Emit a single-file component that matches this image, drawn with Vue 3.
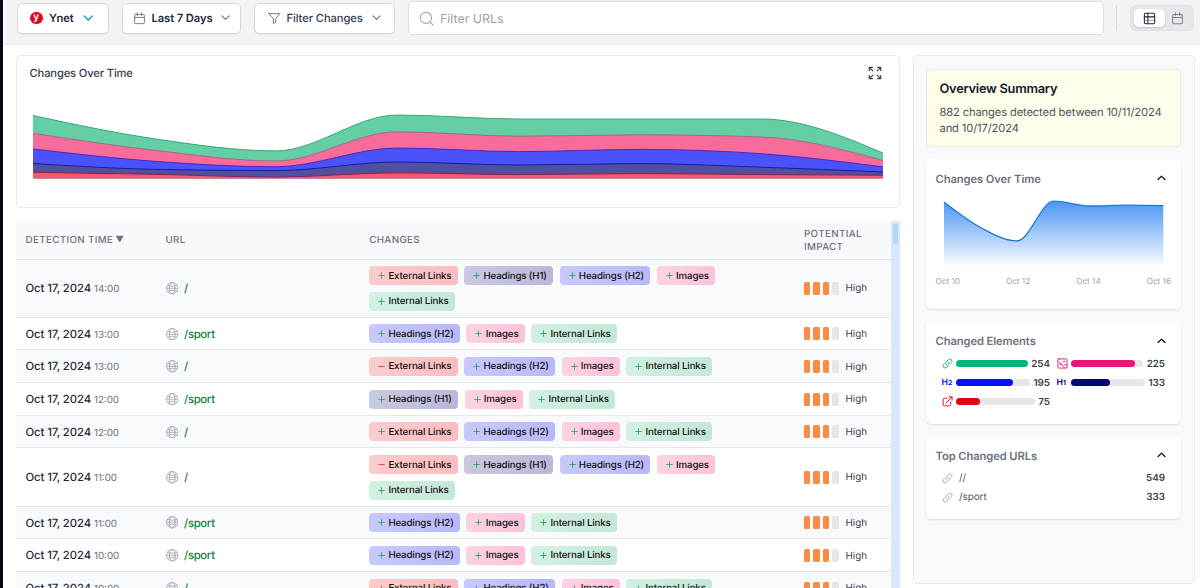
<template>
  <div class="app">
    <div class="rail"></div>
    <div class="main">
      <header class="toolbar">
        <button class="btn site">
          <span class="logo">y</span>
          <span class="label">Ynet</span>
          <svg class="chevron blue" viewBox="0 0 10 6"><path d="M1 .8 5 4.8 9 .8" /></svg>
        </button>
        <button class="btn range">
          <svg class="icon" viewBox="0 0 24 24"><rect x="3" y="4.500" width="18" height="17" rx="2" /><path d="M8 1.500v5M16 1.500v5M3 10h18" /></svg>
          <span class="label">Last 7 Days</span>
          <svg class="chevron" viewBox="0 0 10 6"><path d="M1 .8 5 4.800 9 .8" /></svg>
        </button>
        <button class="btn filter">
          <svg class="icon" viewBox="0 0 24 24"><path d="M2 3h20l-8 9.500V19l-4 2.500v-9z" /></svg>
          <span class="label">Filter Changes</span>
          <svg class="chevron" viewBox="0 0 10 6"><path d="M1 .8 5 4.800 9 .8" /></svg>
        </button>
        <label class="search">
          <svg viewBox="0 0 24 24"><circle cx="11" cy="11" r="9" /><path d="m17.600 17.600 4.900 4.900" /></svg>
          <input type="text" placeholder="Filter URLs" />
        </label>
        <div class="separator"></div>
        <div class="toggle">
          <button class="toggle-btn active">
            <svg viewBox="0 0 24 24"><rect x="2.500" y="2.500" width="19" height="19" rx="2" /><path d="M9 2.500v19M2.500 9h19" /><path d="M2.500 15.200h19" stroke-opacity=".45" /></svg>
          </button>
          <button class="toggle-btn">
            <svg viewBox="0 0 24 24"><rect x="3" y="4.500" width="18" height="17" rx="2" /><path d="M8 1.500v5M16 1.500v5M3 10h18" /></svg>
          </button>
        </div>
      </header>

      <div class="content">
        <div class="left">
          <section class="chart-card">
            <div class="chart-head">
              <h2>Changes Over Time</h2>
              <svg class="expand" viewBox="0 0 16 16">
                <path d="M1.500 5v-3.500h3.500M1.500 1.500l4 4M11 1.500h3.500v3.500M14.500 1.500l-4 4M1.500 11v3.500h3.500M1.500 14.500l4-4M11 14.500h3.500v-3.500M14.500 14.500l-4-4" />
              </svg>
            </div>
            <svg class="stack" viewBox="33 110 850 70">
              <template v-for="layer in layers" :key="layer.name">
                <path :d="layer.area" :fill="layer.fill" />
                <path :d="layer.line" :stroke="layer.stroke" fill="none" />
              </template>
            </svg>
          </section>

          <div class="table-wrap">
            <div class="table">
              <div class="tr th">
                <div class="td">Detection Time <span class="sort">▼</span></div>
                <div class="td">URL</div>
                <div class="td">Changes</div>
                <div class="td">Potential Impact</div>
              </div>
              <div v-for="(row, i) in rows" :key="i" class="tr">
                <div class="td date">
                  <div>Oct 17, 2024 <small>{{ row.time }}</small></div>
                </div>
                <div class="td url">
                  <svg viewBox="0 0 24 24"><circle cx="12" cy="12" r="11" /><ellipse cx="12" cy="12" rx="5.500" ry="11" /><path d="M1 12h22M3 6.500q9 4 18 0M3 17.500q9-4 18 0" /></svg>
                  <a>{{ row.url }}</a>
                </div>
                <div class="td tags">
                  <span v-for="tag in row.tags" :key="tag" class="tag" :class="tagTypes[tag].cls">
                    <svg viewBox="0 0 8 8" :class="{ minus: row.removed && tag === 'ext' }">
                      <path :d="row.removed && tag === 'ext' ? 'M.8 4h6.400' : 'M.8 4h6.400M4 .8v6.400'" />
                    </svg>
                    <b>{{ tagTypes[tag].label }}</b>
                  </span>
                </div>
                <div class="td impact">
                  <i v-for="n in 4" :key="n" :class="{ on: n < 4 }"></i>
                  <span>High</span>
                </div>
              </div>
            </div>
            <div class="scrollbar"><div class="thumb"></div></div>
          </div>
        </div>

        <aside class="sidebar">
          <section class="summary">
            <h3>Overview Summary</h3>
            <p>882 changes detected between 10/11/2024<br />and 10/17/2024</p>
          </section>

          <section class="panel trend">
            <div class="panel-head">
              <h4>Changes Over Time</h4>
              <svg class="caret" viewBox="0 0 10 6"><path d="M1.200 5 5 1.200 8.800 5" /></svg>
            </div>
            <svg class="mini" viewBox="943 198 221 70">
              <defs>
                <linearGradient id="miniFill" x1="0" y1="0" x2="0" y2="1">
                  <stop offset="0" stop-color="#4b97f3" />
                  <stop offset="1" stop-color="#4b8ff3" stop-opacity="0" />
                </linearGradient>
              </defs>
              <path :d="mini.area" fill="url(#miniFill)" />
              <path :d="mini.line" fill="none" stroke="#1c7cd6" stroke-width="1.300" />
            </svg>
            <div class="axis">
              <span>Oct 10</span><span>Oct 12</span><span>Oct 14</span><span>Oct 16</span>
            </div>
          </section>

          <section class="panel elements">
            <div class="panel-head">
              <h4>Changed Elements</h4>
              <svg class="caret" viewBox="0 0 10 6"><path d="M1.200 5 5 1.200 8.800 5" /></svg>
            </div>
            <div class="bars">
              <div v-for="el in elements" :key="el.icon" class="bar-row" :style="{ color: el.color }">
                <span v-if="el.sub" class="h-icon">H<em>{{ el.sub }}</em></span>
                <svg v-else class="el-icon" viewBox="0 0 24 24"><path :d="icons[el.icon]" /></svg>
                <div class="track"><div class="fill" :style="{ width: el.pct + '%' }"></div></div>
                <strong>{{ el.count }}</strong>
              </div>
            </div>
          </section>

          <section class="panel urls">
            <div class="panel-head">
              <h4>Top Changed URLs</h4>
              <svg class="caret" viewBox="0 0 10 6"><path d="M1.200 5 5 1.200 8.800 5" /></svg>
            </div>
            <div v-for="u in topUrls" :key="u.path" class="url-row">
              <svg class="el-icon" viewBox="0 0 24 24"><path :d="icons.link" /></svg>
              <span>{{ u.path }}</span>
              <strong>{{ u.count }}</strong>
            </div>
          </section>
        </aside>
      </div>
    </div>
  </div>
</template>

<script setup>
import { ref, computed } from 'vue';

// Monotone cubic interpolation through the given points
const monotone = (xs, ys) => {
  const n = xs.length;
  const slopes = [];
  for (let i = 0; i < n - 1; i++) slopes.push((ys[i + 1] - ys[i]) / (xs[i + 1] - xs[i]));
  const t = [];
  for (let i = 1; i < n - 1; i++) {
    const a = slopes[i - 1];
    const b = slopes[i];
    t[i] = a * b <= 0 ? 0 : Math.sign(a) * Math.min(Math.abs(a), Math.abs(b), Math.abs(a + b) / 4) * 2;
  }
  t[0] = (3 * slopes[0] - t[1]) / 2;
  t[n - 1] = (3 * slopes[n - 2] - t[n - 2]) / 2;
  let d = `M${xs[0]} ${ys[0]}`;
  for (let i = 0; i < n - 1; i++) {
    const dx = (xs[i + 1] - xs[i]) / 3;
    d += `C${xs[i] + dx} ${ys[i] + dx * t[i]} ${xs[i + 1] - dx} ${ys[i + 1] - dx * t[i + 1]} ${xs[i + 1]} ${ys[i + 1]}`;
  }
  return d;
};

const spread = (from, to, n) => Array.from({ length: n }, (_, i) => from + ((to - from) * i) / (n - 1));

const series = ref([
  { name: 'internal', fill: '#64cfa4', stroke: '#36a97c', ys: [115.5, 138.8, 150.9, 115, 119, 119, 119, 153] },
  { name: 'images', fill: '#f86c9c', stroke: '#a2698d', ys: [133.3, 150.3, 161, 131.8, 136.2, 134.8, 137, 160.5] },
  { name: 'h2', fill: '#4a52fb', stroke: '#4a26c4', ys: [149, 161.3, 166.8, 148, 151.6, 149.4, 153.7, 166.9] },
  { name: 'h1', fill: '#4f50a0', stroke: '#1a1c9c', ys: [163.5, 169.4, 170.6, 162, 165, 163.6, 167.2, 172] },
  { name: 'external', fill: '#ff5860', stroke: '#8c1c50', ys: [172.3, 174.3, 177, 172.8, 174.6, 173.6, 174.6, 175.2] }
]);

const layers = computed(() => {
  const xs = spread(33, 883, 8);
  return series.value.map(s => {
    const line = monotone(xs, s.ys);
    return { ...s, line, area: `${line}V178.300H33Z` };
  });
});

const mini = computed(() => {
  const line = monotone(spread(944, 1163.3, 7), [202, 227.5, 241, 201.2, 206, 205.2, 205.7]);
  return { line, area: `${line}V267H944Z` };
});

const tagTypes = {
  ext: { label: 'External Links', cls: 'red' },
  h1: { label: 'Headings (H1)', cls: 'navy' },
  h2: { label: 'Headings (H2)', cls: 'indigo' },
  img: { label: 'Images', cls: 'pink' },
  int: { label: 'Internal Links', cls: 'green' }
};

const rows = ref([
  { time: '14:00', url: '/', tags: ['ext', 'h1', 'h2', 'img', 'int'] },
  { time: '13:00', url: '/sport', tags: ['h2', 'img', 'int'] },
  { time: '13:00', url: '/', tags: ['ext', 'h2', 'img', 'int'], removed: true },
  { time: '12:00', url: '/sport', tags: ['h1', 'img', 'int'] },
  { time: '12:00', url: '/', tags: ['ext', 'h2', 'img', 'int'] },
  { time: '11:00', url: '/', tags: ['ext', 'h1', 'h2', 'img', 'int'], removed: true },
  { time: '11:00', url: '/sport', tags: ['h2', 'img', 'int'] },
  { time: '10:00', url: '/sport', tags: ['h2', 'img', 'int'] },
  { time: '10:00', url: '/', tags: ['ext', 'h2', 'img', 'int'] }
]);

const icons = {
  link: 'M13.200 8.700a4.500 4.500 0 0 1 1.200 7.200l-4.500 4.500a4.500 4.500 0 0 1-6.400-6.400l1.800-1.700M18.800 11.700l1.700-1.700a4.500 4.500 0 0 0-6.400-6.400l-4.500 4.500a4.500 4.500 0 0 0 1.200 7.200',
  image: 'M4 2h16a2 2 0 0 1 2 2v16a2 2 0 0 1-2 2H4a2 2 0 0 1-2-2V4a2 2 0 0 1 2-2ZM5 9l11 12M6 14l4-1M15 7h2v1h-2zM16 15l3-1 3 2',
  external: 'M11 5H5a2.500 2.500 0 0 0-2.500 2.500V19A2.500 2.500 0 0 0 5 21.500h11.500A2.500 2.500 0 0 0 19 19v-6M8.500 15.500 22 2M15 2h7v7'
};

const elements = ref([
  { icon: 'link', color: '#06b67f', pct: 100, count: 254 },
  { icon: 'image', color: '#ec1379', pct: 89, count: 225 },
  { icon: 'h2', sub: '2', color: '#0a12f5', pct: 77, count: 195 },
  { icon: 'h1', sub: '1', color: '#05057e', pct: 52.3, count: 133 },
  { icon: 'external', color: '#e30613', pct: 30, count: 75 }
]);

const topUrls = ref([
  { path: '//', count: 549 },
  { path: '/sport', count: 333 }
]);
</script>

<style>
body {
  background: #fff;
}
</style>

<style scoped>
* {
  box-sizing: border-box;
}

.app {
  display: flex;
  width: 1200px;
  height: 588px;
  overflow: hidden;
  font-family: Inter, "Liberation Sans", sans-serif;
  text-rendering: geometricPrecision;
  color: #1f2937;
}

h2, h3, h4, p {
  margin: 0;
}

svg {
  display: block;
  flex: none;
  fill: none;
  stroke: currentColor;
  stroke-linecap: round;
  stroke-linejoin: round;
}

button {
  font: inherit;
  color: inherit;
  text-rendering: inherit;
}

.rail {
  width: 3px;
  background: #0a0614;
}

.main {
  flex: 1;
  min-width: 0;
}

/* 顶部工具栏 */
.toolbar {
  display: flex;
  align-items: flex-start;
  height: 45px;
  margin-left: 1px;
  padding-left: 12.5px;
  background: #f2f3f5;
  border-bottom: 1px solid #e7e9ec;
}

.btn {
  display: flex;
  align-items: center;
  height: 31px;
  margin: 3px 13px 0 0;
  padding: 0 0 1px 12.5px;
  background: #fff;
  border: 1px solid #d5d8dd;
  border-radius: 5px;
  box-shadow: 0 1px 1px rgba(0, 0, 0, 0.04);
  font-size: 11.2px;
  font-weight: 600;
  letter-spacing: -0.09px;
  white-space: nowrap;
}

.site { width: 92.5px; }
.range { width: 119px; padding-left: 9.5px; }
.filter { width: 141px; font-weight: 500; color: #374151; }

.btn .icon {
  width: 13px;
  height: 13px;
  margin-right: 6px;
  stroke-width: 1.7;
  color: #6b7280;
}

.logo {
  width: 12.5px;
  height: 12.5px;
  margin-right: 6.5px;
  border-radius: 50%;
  background: #dd0a20;
  color: #fff;
  font-size: 10px;
  line-height: 11px;
  text-align: center;
}

.chevron {
  width: 9px;
  height: 5.5px;
  margin-left: 9px;
  stroke-width: 1.2;
  color: #6b7280;
}

.chevron.blue {
  width: 10.5px;
  height: 6.3px;
  color: #0c8bc4;
}

.search {
  display: flex;
  align-items: center;
  width: 696px;
  height: 34px;
  margin-top: 1px;
  padding-left: 9.5px;
  background: #fff;
  border: 1px solid #d9dce1;
  border-radius: 5px;
  color: #9ca3af;
}

.search svg {
  width: 15px;
  height: 15px;
  margin-right: 6.5px;
  stroke-width: 1.7;
}

.search input {
  flex: 1;
  border: 0;
  padding: 0;
  outline: 0;
  font: 12.4px Inter, sans-serif;
  text-rendering: inherit;
}

.search input::placeholder {
  color: #9ca3af;
}

.separator {
  width: 1px;
  height: 26px;
  margin: 5px 13px 0 12px;
  background: #d6d9de;
}

.toggle {
  display: flex;
  width: 64px;
  height: 26px;
  margin-top: 5px;
  padding: 3px;
  background: #e5e7eb;
  border: 1px solid #dfe1e5;
  border-radius: 6px;
}

.toggle-btn {
  display: flex;
  align-items: center;
  justify-content: center;
  width: 32px;
  padding: 0;
  border: 0;
  border-radius: 5px;
  background: none;
  color: #7b828e;
}

.toggle-btn + .toggle-btn {
  width: 26px;
}

.toggle-btn.active {
  background: #fff;
  color: #1f2937;
  box-shadow: 0 1px 2px rgba(0, 0, 0, 0.15);
}

.toggle svg {
  width: 13px;
  height: 13px;
  stroke-width: 1.9;
}

.content {
  display: flex;
  gap: 12.5px;
  padding: 10px 0 0 13px;
}

.left {
  width: 884px;
}

.chart-card {
  height: 153px;
  border: 1px solid #e8eaed;
  border-radius: 5px;
}

.chart-head {
  display: flex;
  justify-content: space-between;
  align-items: center;
  height: 34px;
  padding: 0 17px 0 12.5px;
}

.chart-head h2 {
  font-size: 11.2px;
  font-weight: 500;
  letter-spacing: -0.15px;
  color: #374151;
}

.expand {
  width: 14px;
  height: 14px;
  stroke-width: 1.4;
  color: #374151;
}

.stack {
  width: 850px;
  height: 70px;
  margin: 20px 0 0 15.5px;
}

.stack path,
.mini path {
  stroke-linecap: butt;
}

.stack path:nth-child(odd),
.mini path:first-of-type {
  stroke: none;
}

/* 变更表格 */
.table-wrap {
  display: flex;
  margin-top: 12.5px;
}

.table {
  width: 875px;
}

.tr {
  display: grid;
  grid-template-columns: 140px 203.7px 434.8px 1fr;
  border-bottom: 1px solid #e5e7eb;
}

.tr:nth-child(even) {
  background: #f9fafb;
}

.tr .td {
  display: flex;
  align-items: center;
  padding: 6.6px 0 6.1px 9.5px;
}

.tr.th {
  height: 39px;
  background: #f8f9fb;
  font-size: 9.8px;
  font-weight: 500;
  line-height: 13px;
  letter-spacing: 0.34px;
  text-transform: uppercase;
  color: #6b7280;
}

.tr.th .td {
  padding-top: 2px;
  padding-bottom: 0;
}

.sort {
  margin-left: 2px;
  font-size: 8.6px;
}

.date {
  font-size: 11.3px;
  font-weight: 500;
  letter-spacing: -0.09px;
  white-space: nowrap;
}

.date small {
  font-size: 9.8px;
  font-weight: 400;
  letter-spacing: 0;
  color: #6b7280;
}

.url svg {
  width: 12.5px;
  height: 12.5px;
  margin-right: 6px;
  stroke-width: 1.5;
  color: #9ca3af;
}

.url a {
  font-size: 11.3px;
  font-weight: 500;
  letter-spacing: -0.3px;
  color: #15803d;
}

.tags {
  flex-wrap: wrap;
  gap: 6.5px;
}

.tag {
  display: flex;
  align-items: center;
  height: 19px;
  padding: 0 6.3px 0 9px;
  border-radius: 4px;
  font-size: 9.7px;
}

.tag b {
  padding-top: 1px;
  font-weight: 500;
  letter-spacing: -0.13px;
  color: #111;
  white-space: nowrap;
}

.tag svg {
  width: 7px;
  height: 7px;
  margin-right: 3.2px;
  color: #2ea56d;
}

.tag svg.minus {
  color: #e23b45;
}

.red { background: linear-gradient(90deg, #fccccd, #fbbdbf); }
.navy { background: linear-gradient(90deg, #cac9e2, #b9b8da); }
.indigo { background: linear-gradient(90deg, #c9c9fc, #b8b8fa); }
.pink { background: linear-gradient(90deg, #fdd3e4, #fbc2d8); }
.green { background: linear-gradient(90deg, #d2f1e2, #c4e8d8); }

.impact i {
  width: 6.5px;
  height: 13px;
  margin-right: 3px;
  border-radius: 1.5px;
  background: #e5e7eb;
}

.impact i.on {
  background: #fb8c44;
}

.impact span {
  margin-left: 3.5px;
  padding-top: 1.2px;
  font-size: 9.8px;
  color: #374151;
}

.scrollbar {
  width: 9px;
  padding: 3px 2px 0;
  background: #d6e9fd;
}

.thumb {
  height: 20px;
  border-radius: 2px;
  background: #b2d5fb;
}

/* 右侧概览 */
.sidebar {
  width: 282.5px;
  height: 528.5px;
  padding: 12.5px 13px 0 12px;
  border: 1px solid #e8eaee;
  border-radius: 5px;
  background: #f9fafb;
}

.summary {
  height: 78px;
  padding: 11px 0 0 13px;
  border: 1px solid #efefdf;
  border-radius: 4px;
  background: #fffeea;
}

.summary h3 {
  font-size: 12.8px;
  font-weight: 600;
  line-height: 17px;
  letter-spacing: -0.24px;
  color: #111827;
}

.summary p {
  margin-top: 6.5px;
  font-size: 11.2px;
  line-height: 16px;
  letter-spacing: -0.14px;
  white-space: nowrap;
  color: #4b5563;
}

.panel {
  margin-top: 12.5px;
  padding: 9px 14px 0 10px;
  border-radius: 5px;
  background: #fff;
  box-shadow: 0 1px 2px rgba(0, 0, 0, 0.12);
}

.trend { height: 150px; }
.elements { height: 102px; }
.urls { height: 83px; }

.panel-head {
  display: flex;
  align-items: center;
  justify-content: space-between;
  height: 20px;
}

.panel-head h4 {
  padding-top: 1px;
  font-size: 11.2px;
  font-weight: 600;
  letter-spacing: -0.09px;
  color: #6b7280;
}

.caret {
  width: 9px;
  height: 5.5px;
  margin-right: 1px;
  stroke-width: 1.5;
  color: #111827;
}

.mini {
  width: 221px;
  height: 70px;
  margin: 9.5px 0 0 7px;
}

.axis {
  display: flex;
  justify-content: space-between;
  margin: 7px -4px 0 0;
  font-size: 8.2px;
  line-height: 12px;
  color: #9ca3af;
}

.bars {
  display: grid;
  grid-template-columns: 108.5px 108.5px;
  column-gap: 6.5px;
  grid-auto-rows: 19.1px;
  margin: 3.3px 0 0 6px;
}

.bar-row,
.url-row {
  display: flex;
  align-items: center;
}

.el-icon {
  width: 11px;
  height: 11px;
  stroke-width: 2;
}

.h-icon {
  width: 11px;
  padding-top: 1px;
  font-size: 8.6px;
  font-weight: 600;
  white-space: nowrap;
}

.h-icon em {
  font-size: 6.8px;
  font-style: normal;
  font-weight: 700;
}

.track {
  flex: 1;
  height: 6.5px;
  margin: 0 3.5px;
  border-radius: 4px;
  background: #e5e7eb;
}

.fill {
  height: 100%;
  border-radius: 4px;
  background: currentColor;
}

.bar-row strong,
.url-row strong {
  padding-top: 1.6px;
  font-size: 9.8px;
  font-weight: 600;
  color: #374151;
}

.url-row {
  height: 19px;
  padding: 0 2px 0 6px;
  font-size: 9.8px;
  color: #4b5563;
}

.url-row span {
  padding-top: 1.6px;
}

.panel-head + .url-row {
  margin-top: 3.5px;
}

.url-row .el-icon {
  margin-right: 6.5px;
  stroke-width: 1.9;
  color: #9ca3af;
}

.url-row strong {
  margin-left: auto;
}
</style>
